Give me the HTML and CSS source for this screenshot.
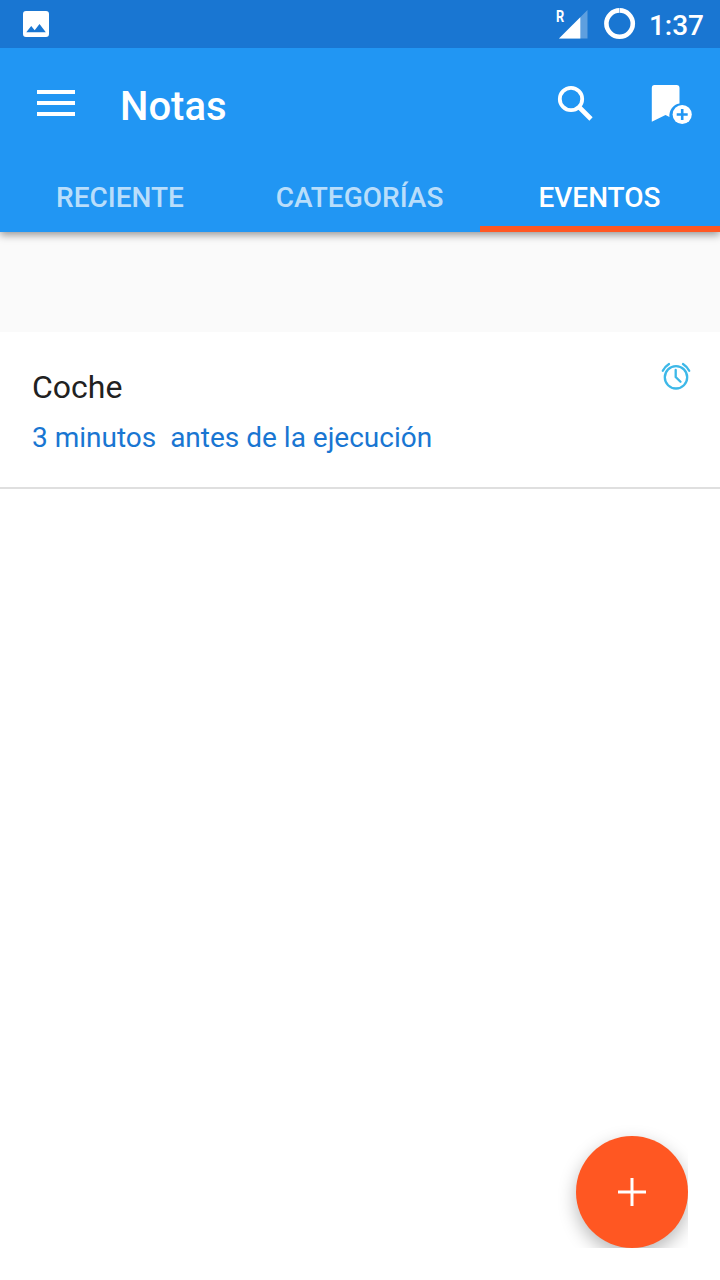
FILE: index.html
```
<!DOCTYPE html>
<html lang="es">
<head>
<meta charset="utf-8">
<title>Notas</title>
<link rel="stylesheet" href="styles.css">
</head>
<body>
<div class="screen">
  <header class="header">
    <div class="status-bar">
      <svg class="status-picture" width="26" height="26" viewBox="0 0 26 26"><path fill="#fff" fill-rule="evenodd" d="M3 0H23A3 3 0 0 1 26 3V23A3 3 0 0 1 23 26H3A3 3 0 0 1 0 23V3A3 3 0 0 1 3 0ZM3.300 21.300H22.800L16.500 13L11.700 19.200L8.200 15Z"/></svg>
      <span class="carrier">R</span>
      <svg class="signal" width="29" height="29" viewBox="0 0 29 29"><path fill="#fff" fill-opacity=".3" d="M0 28.500H28.500V0Z"/><path fill="#fff" d="M0 28.500H21.300V7.200Z"/></svg>
      <svg class="battery" width="32" height="32" viewBox="0 0 32 32"><circle cx="15.600" cy="15.600" r="13.200" fill="none" stroke="#fff" stroke-width="4.600"/><path d="M15.500 0V4.800" stroke="#1976d2" stroke-opacity=".45" stroke-width="1"/></svg>
      <span class="clock">1:37</span>
    </div>
    <div class="app-bar">
      <svg class="menu" width="38" height="26" viewBox="0 0 38 26"><path fill="#fff" d="M0 0H38V4H0ZM0 11H38V15H0ZM0 22H38V26H0Z"/></svg>
      <h1 class="title">Notas</h1>
      <svg class="search" width="38" height="38" viewBox="0 0 38 38"><circle cx="14" cy="14" r="11.200" fill="none" stroke="#fff" stroke-width="3.800"/><path d="M22 22L34 34" stroke="#fff" stroke-width="4.600"/></svg>
      <svg class="add-bookmark" width="42" height="40" viewBox="0 0 42 40"><path fill="#fff" d="M3.500 0H25.500Q28.500 0 28.500 3V18.500A12 12 0 0 0 18.500 32L14.500 30L.8 36.700V3Q.8 0 3.500 0Z"/><circle cx="31.200" cy="29.500" r="9.600" fill="#fff"/><path d="M25.700 29.500H36.700M31.200 24V35" stroke="#2196f3" stroke-width="2.600"/></svg>
    </div>
    <nav class="tabs">
      <span class="tab">RECIENTE</span>
      <span class="tab tab-middle">CATEGORÍAS</span>
      <span class="tab tab-active">EVENTOS</span>
    </nav>
  </header>
  <div class="spacer"></div>
  <main class="list">
    <article class="note">
      <div class="note-body">
        <h2 class="note-title">Coche</h2>
        <p class="note-time">3 minutos&nbsp; antes de la ejecución</p>
      </div>
      <svg class="alarm" width="30" height="30" viewBox="0 0 30 30" fill="none" stroke="#3db8e8" stroke-width="2.300" stroke-linecap="round"><circle cx="15" cy="16.300" r="11.200"/><path d="M14.700 9V16L19.500 20.800M1.800 9.800Q4 5.500 8 3M28.200 9.800Q26 5.500 22 3"/></svg>
    </article>
  </main>
  <div class="fab-area">
    <div class="fab"><svg width="28" height="28" viewBox="0 0 28 28"><path d="M0 14H28M14 0V28" stroke="#fff" stroke-width="3"/></svg></div>
  </div>
</div>
</body>
</html>
```
FILE: styles.css
```
* { box-sizing: border-box; }
body { margin: 0; font-family: Roboto, "Noto Sans", sans-serif; background: #fff; }
h1, h2, p { margin: 0; }
svg { display: block; flex: none; }
.screen { position: relative; width: 720px; height: 1280px; overflow: hidden; background: #fff; }
.header { position: relative; z-index: 1; height: 232px; background: #2196f3; color: #fff; box-shadow: 0 3px 8px rgba(0,0,0,.4); }
.status-bar { display: flex; height: 48px; background: #1976d2; align-items: flex-start; padding-right: 16px; }
.status-picture { margin: 11px auto 0 23px; }
.carrier { width: 9px; margin-top: 8px; font-size: 16px; line-height: 18px; font-weight: 700; transform: scaleX(.8); transform-origin: left; }
.signal { margin: 10px 0 0 -6px; }
.battery { margin: 8px 0 0 16px; }
.clock { margin-left: 13px; font-size: 28px; line-height: 51px; font-weight: 500; }
.app-bar { display: flex; height: 112px; align-items: flex-start; padding: 0 27px 0 37px; }
.menu { margin-top: 42px; }
.title { margin: 35px auto 0 45px; font-size: 40px; line-height: 48px; font-weight: 500; }
.search { margin-top: 37px; }
.add-bookmark { margin: 37px 0 0 56px; }
.tabs { display: grid; grid-template-columns: repeat(3, 1fr); grid-template-rows: 72px; height: 72px; }
.tab { height: 72px; padding-top: 8px; text-align: center; font-size: 28px; line-height: 60px; font-weight: 500; color: rgba(255,255,255,.7); }
.tab-middle { padding-right: 1px; }
.tab-active { padding-right: 1px; color: #fff; border-bottom: 6px solid #ff5722; }
.spacer { height: 100px; background: #fafafa; }
.note { display: flex; justify-content: space-between; height: 157px; padding: 35px 29px 0 32px; border-bottom: 2px solid #dfdfdf; }
.note-title { font-size: 32px; line-height: 40px; font-weight: 400; color: #212121; }
.note-time { margin-top: 14px; font-size: 28px; line-height: 34px; color: #1976d2; }
.alarm { margin-top: -6px; }
.fab-area { position: absolute; right: 32px; bottom: 32px; padding: 24px 0 0 24px; overflow: hidden; }
.fab { display: flex; width: 112px; height: 112px; align-items: center; justify-content: center; border-radius: 50%; background: #ff5722; box-shadow: 0 7px 18px rgba(0,0,0,.28); }
```
